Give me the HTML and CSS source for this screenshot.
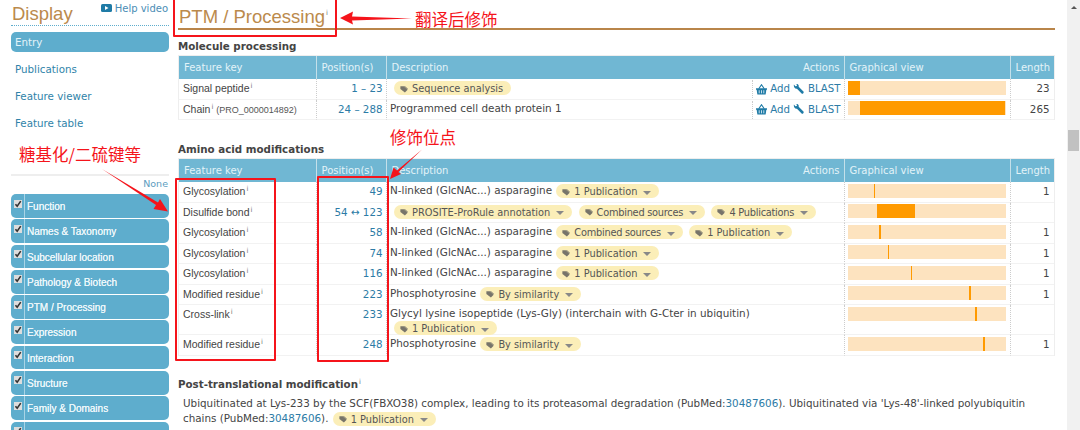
FILE: index.html
```html
<!DOCTYPE html>
<html lang="en">
<head>
<meta charset="utf-8">
<title>PTM / Processing</title>
<link rel="stylesheet" href="styles.css">
</head>
<body>
<svg class="defs" width="0" height="0" aria-hidden="true">
  <symbol id="tag" viewBox="0 0 10 10"><path d="M0.5 1.5h4.2l4.8 4.3-3.4 3.7-5.6-4.6z" fill="#77746a"/><path d="M6 1.2l3.8 3.6-.7.8-4.2-4.4z" fill="#77746a"/></symbol>
  <symbol id="check" viewBox="0 0 10 10"><path d="M1.8 5.2l2.2 2.6 4.4-6.4" fill="none" stroke="#333" stroke-width="2"/></symbol>
  <symbol id="basket" viewBox="0 0 12 12"><path d="M3 5.2L6 .8l3 4.4" fill="none" stroke="#1f7ba6" stroke-width="1.2"/><path d="M0 4.6h12v1.6h-.7l-.8 5.3h-9l-.8-5.3H0z" fill="#1f7ba6"/><path d="M3.5 6.8v3.4M6 6.8v3.4M8.5 6.8v3.4" stroke="#fff" stroke-width=".8"/></symbol>
  <symbol id="wrench" viewBox="0 0 12 12"><path d="M1 .6l1.6 1.9 1.5-.2.3-1.4L3 0c2-.5 3.700.9 3.200 3l5.200 5.200c.9 1-.6 3.100-2 2.200L4.300 5.100C2.200 5.600.4 3.300 1 .6z" fill="#1f7ba6"/></symbol>
</svg>

<div class="page">
  <aside class="side">
    <div class="side-head">
      <span class="display">Display</span>
      <a class="help"><svg class="play" viewBox="0 0 11 8"><rect width="11" height="8" rx="1.500" fill="#1f7ba6"/><path d="M4 2l3.500 2L4 6z" fill="#fff"/></svg>Help video</a>
    </div>
    <nav class="side-nav">
      <a class="nav-item nav-on">Entry</a>
      <a class="nav-item">Publications</a>
      <a class="nav-item">Feature viewer</a>
      <a class="nav-item">Feature table</a>
    </nav>
    <div class="side-rule"></div>
    <a class="none">None</a>
    <ul class="sections">
      <li class="sec"><span class="sec-box"><svg class="chk" viewBox="0 0 10 10"><use href="#check"/></svg></span><span class="sec-name">Function</span></li>
      <li class="sec"><span class="sec-box"><svg class="chk" viewBox="0 0 10 10"><use href="#check"/></svg></span><span class="sec-name">Names &amp; Taxonomy</span></li>
      <li class="sec"><span class="sec-box"><svg class="chk" viewBox="0 0 10 10"><use href="#check"/></svg></span><span class="sec-name">Subcellular location</span></li>
      <li class="sec"><span class="sec-box"><svg class="chk" viewBox="0 0 10 10"><use href="#check"/></svg></span><span class="sec-name">Pathology &amp; Biotech</span></li>
      <li class="sec"><span class="sec-box"><svg class="chk" viewBox="0 0 10 10"><use href="#check"/></svg></span><span class="sec-name">PTM / Processing</span></li>
      <li class="sec"><span class="sec-box"><svg class="chk" viewBox="0 0 10 10"><use href="#check"/></svg></span><span class="sec-name">Expression</span></li>
      <li class="sec"><span class="sec-box"><svg class="chk" viewBox="0 0 10 10"><use href="#check"/></svg></span><span class="sec-name">Interaction</span></li>
      <li class="sec"><span class="sec-box"><svg class="chk" viewBox="0 0 10 10"><use href="#check"/></svg></span><span class="sec-name">Structure</span></li>
      <li class="sec"><span class="sec-box"><svg class="chk" viewBox="0 0 10 10"><use href="#check"/></svg></span><span class="sec-name">Family &amp; Domains</span></li>
      <li class="sec"><span class="sec-box"><svg class="chk" viewBox="0 0 10 10"><use href="#check"/></svg></span><span class="sec-name"></span></li>
    </ul>
  </aside>

  <main class="main">
    <h1 class="title">PTM / Processing<sup class="inf">i</sup></h1>

    <h2 class="sub sub-first">Molecule processing</h2>
    <table class="ft">
      <colgroup><col class="c1"><col class="c2"><col class="c3"><col class="c4"><col class="c5"></colgroup>
      <thead><tr><th>Feature key</th><th>Position(s)</th><th><div class="desc-head"><span>Description</span><span>Actions</span></div></th><th>Graphical view</th><th>Length</th></tr></thead>
      <tbody>
        <tr>
          <td class="key">Signal peptide<sup class="inf">i</sup></td>
          <td class="pos"><a>1 – 23</a></td>
          <td class="desc"><div class="desc-row"><div class="desc-main"><span class="pill pill-lead"><svg class="tag"><use href="#tag"/></svg>Sequence analysis</span></div><div class="acts"><svg class="ico"><use href="#basket"/></svg><a>Add</a><svg class="ico"><use href="#wrench"/></svg><a>BLAST</a></div></div></td>
          <td class="gv"><div class="bar"><i class="seg" style="margin-left:0;width:7.7%"></i></div></td>
          <td class="len">23</td>
        </tr>
        <tr>
          <td class="key">Chain<sup class="inf">i</sup> <span class="pro">(PRO_0000014892)</span></td>
          <td class="pos"><a>24 – 288</a></td>
          <td class="desc"><div class="desc-row"><div class="desc-main">Programmed cell death protein 1</div><div class="acts"><svg class="ico"><use href="#basket"/></svg><a>Add</a><svg class="ico"><use href="#wrench"/></svg><a>BLAST</a></div></div></td>
          <td class="gv"><div class="bar"><i class="seg" style="margin-left:7.7%;width:92.3%"></i></div></td>
          <td class="len">265</td>
        </tr>
      </tbody>
    </table>

    <h2 class="sub sub-second">Amino acid modifications</h2>
    <table class="ft">
      <colgroup><col class="c1"><col class="c2"><col class="c3"><col class="c4"><col class="c5"></colgroup>
      <thead><tr><th>Feature key</th><th>Position(s)</th><th><div class="desc-head"><span>Description</span><span>Actions</span></div></th><th>Graphical view</th><th>Length</th></tr></thead>
      <tbody>
        <tr><td class="key">Glycosylation<sup class="inf">i</sup></td><td class="pos"><a>49</a></td>
          <td class="desc">N-linked (GlcNAc...) asparagine <span class="pill"><svg class="tag"><use href="#tag"/></svg>1 Publication<i class="caret"></i></span></td>
          <td class="gv"><div class="bar"><i class="seg" style="margin-left:16.6%;width:1.1%"></i></div></td><td class="len">1</td></tr>
        <tr><td class="key">Disulfide bond<sup class="inf">i</sup></td><td class="pos"><a>54 ↔ 123</a></td>
          <td class="desc"><span class="pill pill-lead"><svg class="tag"><use href="#tag"/></svg>PROSITE-ProRule annotation<i class="caret"></i></span> <span class="pill pill-tight"><svg class="tag"><use href="#tag"/></svg>Combined sources<i class="caret"></i></span> <span class="pill pill-tight"><svg class="tag"><use href="#tag"/></svg>4 Publications<i class="caret"></i></span></td>
          <td class="gv"><div class="bar"><i class="seg" style="margin-left:18.500%;width:24%"></i></div></td><td class="len"></td></tr>
        <tr><td class="key">Glycosylation<sup class="inf">i</sup></td><td class="pos"><a>58</a></td>
          <td class="desc">N-linked (GlcNAc...) asparagine <span class="pill pill-tight"><svg class="tag"><use href="#tag"/></svg>Combined sources<i class="caret"></i></span> <span class="pill"><svg class="tag"><use href="#tag"/></svg>1 Publication<i class="caret"></i></span></td>
          <td class="gv"><div class="bar"><i class="seg" style="margin-left:19.800%;width:1.1%"></i></div></td><td class="len">1</td></tr>
        <tr><td class="key">Glycosylation<sup class="inf">i</sup></td><td class="pos"><a>74</a></td>
          <td class="desc">N-linked (GlcNAc...) asparagine <span class="pill"><svg class="tag"><use href="#tag"/></svg>1 Publication<i class="caret"></i></span></td>
          <td class="gv"><div class="bar"><i class="seg" style="margin-left:25.400%;width:1.1%"></i></div></td><td class="len">1</td></tr>
        <tr><td class="key">Glycosylation<sup class="inf">i</sup></td><td class="pos"><a>116</a></td>
          <td class="desc">N-linked (GlcNAc...) asparagine <span class="pill"><svg class="tag"><use href="#tag"/></svg>1 Publication<i class="caret"></i></span></td>
          <td class="gv"><div class="bar"><i class="seg" style="margin-left:40%;width:1.1%"></i></div></td><td class="len">1</td></tr>
        <tr><td class="key">Modified residue<sup class="inf">i</sup></td><td class="pos"><a>223</a></td>
          <td class="desc">Phosphotyrosine <span class="pill"><svg class="tag"><use href="#tag"/></svg>By similarity<i class="caret"></i></span></td>
          <td class="gv"><div class="bar"><i class="seg" style="margin-left:77.100%;width:1.2%"></i></div></td><td class="len">1</td></tr>
        <tr class="tall"><td class="key">Cross-link<sup class="inf">i</sup></td><td class="pos"><a>233</a></td>
          <td class="desc">Glycyl lysine isopeptide (Lys-Gly) (interchain with G-Cter in ubiquitin)<br><span class="pill pill-lead"><svg class="tag"><use href="#tag"/></svg>1 Publication<i class="caret"></i></span></td>
          <td class="gv"><div class="bar"><i class="seg" style="margin-left:80.800%;width:1.2%"></i></div></td><td class="len"></td></tr>
        <tr><td class="key">Modified residue<sup class="inf">i</sup></td><td class="pos"><a>248</a></td>
          <td class="desc">Phosphotyrosine <span class="pill"><svg class="tag"><use href="#tag"/></svg>By similarity<i class="caret"></i></span></td>
          <td class="gv"><div class="bar"><i class="seg" style="margin-left:85.800%;width:1.2%"></i></div></td><td class="len">1</td></tr>
      </tbody>
    </table>

    <h2 class="sub sub-third">Post-translational modification<sup class="inf">i</sup></h2>
    <p class="para">Ubiquitinated at Lys-233 by the SCF(FBXO38) complex, leading to its proteasomal degradation (PubMed:<a>30487606</a>). Ubiquitinated via 'Lys-48'-linked polyubiquitin chains (PubMed:<a>30487606</a>). <span class="pill"><svg class="tag"><use href="#tag"/></svg>1 Publication<i class="caret"></i></span></p>
  </main>

  <div class="scrollbar"><i class="sb-up"></i><i class="sb-thumb"></i></div>
</div>

<div class="notes">
  <div class="box box-title"></div>
  <div class="box box-key"></div>
  <div class="box box-pos"></div>
  <span class="note note-a">翻译后修饰</span>
  <span class="note note-b">修饰位点</span>
  <span class="note note-c">糖基化/二硫键等</span>
  <svg class="arrows" viewBox="0 0 1080 430">
    <path d="M412 18.500L352 16.500l1-5L340 18l13 6.500-1-4z" fill="#f5141b"/>
    <path d="M422 149.500L397 170.500l-3.500-3L390 179l11-5-2.500-2z" fill="#f5141b"/>
    <path d="M102 169L156 205l-2.500 4 14.500 2.500-8-12.500-2 3.500z" fill="#f5141b"/>
  </svg>
</div>
</body>
</html>
```
FILE: styles.css
```css
* { box-sizing: border-box; }
html, body { margin: 0; height: 430px; overflow: hidden; background: #fff; }
body { font-family: "DejaVu Sans", Verdana, sans-serif; font-size: 10.300px; color: #444; position: relative; }
.defs { position: absolute; }
a { color: #2c7ba6; }

.page { display: flex; height: 430px; overflow: hidden; }

/* sidebar */
.side { width: 158px; margin-left: 11px; flex: none; }
.side-head { display: flex; justify-content: space-between; height: 26px; border-bottom: 1px dotted #5eadcd; }
.display { font: 18.500px/28px "Liberation Sans", Arial, sans-serif; color: #bb8a4c; margin-left: 1px; }
.help { display: flex; align-items: flex-start; font-size: 10px; line-height: 18px; color: #4b8db5; margin-right: 1px; }
.play { width: 11px; height: 8px; margin: 4px 3px 0 0; }
.side-nav { display: flex; flex-direction: column; gap: 7px; margin-top: 6px; }
.nav-item { height: 20px; line-height: 20px; padding-left: 4px; font-size: 10.300px; color: #2f83a9; }
.nav-on { background: #5eadcd; border-radius: 5px; color: #e4f3f9; }
.side-rule { height: 2px; background: #eee; margin-top: 41px; }
.none { display: block; text-align: right; font-size: 9.500px; line-height: 12px; margin-top: 2px; color: #5b9dc0; margin-right: 1px; }
.sections { list-style: none; margin: 4px 0 0; padding: 0; width: 158px; display: flex; flex-direction: column; gap: 1.600px; }
.sec { display: flex; height: 23.700px; background: #5eadcd; border-radius: 5px; }
.sec-box { width: 14px; border-right: 1px solid #a9d4e6; display: block; padding: 5.500px 0 0 2.500px; flex: none; }
.chk { display: block; width: 8px; height: 8px; background: #ddd; }
.sec-name { font: 10px/25px "Liberation Sans", Arial, sans-serif; color: #eaf6fa; padding-left: 2px; text-shadow: 0 0 .6px #fff; }

/* main */
.main { width: 877px; margin-left: 9px; flex: none; }
.title { margin: 0; height: 30px; font: 18.500px/34px "Liberation Sans", Arial, sans-serif; color: #bb8a4c; padding-left: 1px; border-bottom: 2px solid #b9854a; }
.inf { font: 7px/0 "DejaVu Sans", sans-serif; color: #777; vertical-align: 4px; margin-left: 1px; }
.title .inf { vertical-align: 8px; }
.sub { margin: 0; font-size: 10.300px; line-height: 14px; font-weight: bold; color: #444; }
.sub-first { margin-top: 9px; height: 16px; }
.sub-second { margin-top: 22px; height: 16px; line-height: 14px; }
.sub-third { margin-top: 21px; height: 15px; }

.ft { width: 876px; table-layout: fixed; border-collapse: separate; border-spacing: 0; border-top: 1px solid #eee; border-right: 1px solid #eee; }
.c1 { width: 137.500px; }
.c2 { width: 70px; }
.c3 { width: 458px; }
.c4 { width: 166px; }
.c5 { width: 44.500px; }
.ft th { background: #70b7d3; color: #e3f3f8; height: 23px; padding: 0 4px 0 5px; font-size: 10px; font-weight: normal; text-align: left; border-left: 1px solid #c4e0ea; white-space: nowrap; }
.ft th:first-child { border-left: 1px solid #eee; }
.desc-head { display: flex; justify-content: space-between; }
.ft td { height: 20.500px; padding: 0 4px; border-bottom: 1.500px solid #f2f2f2; border-left: 1px dotted #ccc; vertical-align: top; font-size: 10.300px; line-height: 14px; white-space: nowrap; }
.ft td:first-child { border-left: 1px solid #eee; }
.ft .tall td { height: 29px; }
.ft .key { font-family: "Liberation Sans", Arial, sans-serif; font-size: 10.500px; padding-top: 2px; color: #444; }
.pro { font-size: 9px; color: #555; }
.ft .pos { text-align: right; padding: 2px 3px 0 0; }
.ft .desc { padding: 1px 3px 0 3.500px; font-size: 10.400px; }
.desc-row { display: flex; justify-content: space-between; }
.acts { display: flex; align-items: center; gap: 3.500px; height: 18px; padding-left: 3px; border-left: 1px dotted #ccc; font-size: 10.200px; }
.ico { width: 11px; height: 11px; }
.pill { display: inline-flex; align-items: center; height: 14px; line-height: 14px; padding: 2px 8px 0 6px; border-radius: 7px; background: #fbeeb8; color: #555; font-size: 9.800px; vertical-align: top; margin-left: 1px; margin-right: 2px; transform: translateY(1px); }
.pill-lead { margin-left: 4px; }
.pill-tight { letter-spacing: -.25px; }
.tag { width: 8px; height: 8px; margin: -1px 4px 0 0; flex: none; }
.caret { width: 0; height: 0; border: 4px solid transparent; border-top: 4px solid #888; border-bottom: 0; margin: 1px 0 0 6px; }
.ft .gv { padding: 1.500px 4px 0 3px; }
.bar { display: flex; height: 14px; background: #fde3bf; }
.seg { display: block; height: 14px; background: #ff9a00; }
.ft .len { text-align: right; padding: 2px 4.500px 0 0; }
.para { margin: 4px 25px 0 5px; font-size: 10.370px; line-height: 15px; }

/* scrollbar */
.scrollbar { width: 13px; margin-left: 12px; background: #f1f1f1; flex: none; height: 430px; display: flex; flex-direction: column; align-items: center; }
.sb-up { display: block; width: 0; height: 0; border: 3px solid transparent; border-bottom: 3px solid #555; border-top: 0; margin-top: 6px; }
.sb-thumb { display: block; width: 11px; height: 21px; background: #c1c1c1; margin-top: 121px; }

/* annotations */
.notes { position: absolute; left: 0; top: 0; width: 1080px; height: 430px; pointer-events: none; }
.box { position: absolute; border: 2px solid #f5141b; border-radius: 1px; }
.box-title { left: 173px; top: -2px; width: 164px; height: 39px; }
.box-key { left: 175px; top: 178px; width: 101px; height: 183px; }
.box-pos { left: 317px; top: 176px; width: 72px; height: 186px; }
.note { position: absolute; font: 16.500px/20px "Noto Sans CJK SC", sans-serif; color: #f5141b; white-space: nowrap; }
.note-a { left: 415px; top: 9px; }
.note-b { left: 390px; top: 127px; }
.note-c { left: 19px; top: 144px; }
.arrows { position: absolute; left: 0; top: 0; width: 1080px; height: 430px; }
```
